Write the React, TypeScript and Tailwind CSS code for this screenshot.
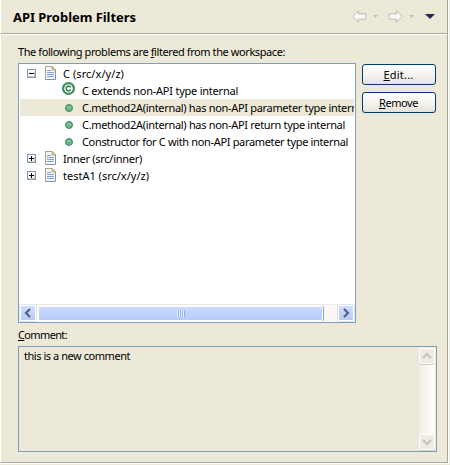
import { useLayoutEffect, useRef, useState, type ReactNode } from "react";

/** Text spaced out so that it spans exactly `width` pixels. */
function Fit({ width, children }: { width: number; children: ReactNode }) {
  const ref = useRef<HTMLSpanElement>(null);
  const [spacing, setSpacing] = useState(0);
  useLayoutEffect(() => {
    const el = ref.current;
    if (!el) return;
    const count = (el.textContent ?? "").length;
    const natural = el.getBoundingClientRect().width - spacing * count;
    const next = (width - natural) / count;
    if (Math.abs(next - spacing) > 0.01) setSpacing(next);
  }, [width, spacing]);
  return (
    <span ref={ref} className="inline-block shrink-0 whitespace-nowrap" style={{ letterSpacing: `${spacing}px` }}>
      {children}
    </span>
  );
}

function Key({ children }: { children: ReactNode }) {
  return <span className="underline decoration-1 underline-offset-[1px] [text-decoration-skip-ink:none]">{children}</span>;
}

function Toggle({ open }: { open: boolean }) {
  return (
    <svg width="9" height="9" viewBox="0 0 9 9" shapeRendering="crispEdges" className="shrink-0">
      <rect x=".5" y=".5" width="8" height="8" fill="#fbfaf7" stroke="#7b98b5" />
      <path d="M1 7h7v1H1zM7 3h1v5H7z" fill="#d2cbbd" />
      <path d="M2 4h5v1H2z" fill="#000" />
      {!open && <path d="M4 2h1v5H4z" fill="#000" />}
    </svg>
  );
}

function FileIcon() {
  return (
    <svg width="11" height="14" viewBox="0 0 11 14" className="shrink-0">
      <path d="M.5.5h6.5l3.5 3.5v9.5H.5z" fill="#f2f7ff" stroke="#8292b4" />
      <path d="M.5 13V.5H7" fill="none" stroke="#b0a678" />
      <path d="M7 .5V4h3.5z" fill="#ead49a" stroke="#b69a56" strokeWidth=".8" />
      <path d="M2 4.5h4M2 6.5h7M2 8.5h7M2 10.5h7" stroke="#86a3d6" />
    </svg>
  );
}

function ClassIcon() {
  return (
    <svg width="13" height="13" viewBox="0 0 13 13" className="shrink-0">
      <circle cx="6.5" cy="6.5" r="6.1" fill="#3f925c" stroke="#2d7b4b" strokeWidth=".8" />
      <circle cx="6.5" cy="6.5" r="4.3" fill="#fff" />
      <path d="M8.7 5.3A2.4 2.4 0 1 0 8.7 7.7" fill="none" stroke="#2d7b4b" strokeWidth="1.5" />
    </svg>
  );
}

function MethodIcon() {
  return (
    <svg width="8" height="8" viewBox="0 0 8 8" className="shrink-0">
      <circle cx="4" cy="4" r="3.5" fill="#69b583" stroke="#31845a" strokeWidth=".9" />
      <path d="M2.2 3.2h3.6" stroke="#a5d5b2" />
    </svg>
  );
}

function FileRow({ name, width, open = false }: { name: string; width: number; open?: boolean }) {
  return (
    <div className="flex h-[17px] items-center pl-[7px]">
      <Toggle open={open} />
      <div className="ml-[9px] mr-[7px] flex pb-px"><FileIcon /></div>
      <Fit width={width}>{name}</Fit>
    </div>
  );
}

function ProblemRow({ text, width, kind = "method", selected = false }: { text: string; width: number; kind?: string; selected?: boolean }) {
  return (
    <div className={`flex h-[17px] items-center overflow-hidden pl-[42px] ${selected ? "bg-[#ece9d8]" : ""}`}>
      <div className={`mr-[6px] flex w-[14px] shrink-0 ${kind === "class" ? "justify-start pb-[4px]" : "justify-center"}`}>
        {kind === "class" ? <ClassIcon /> : <MethodIcon />}
      </div>
      <Fit width={width}>{text}</Fit>
    </div>
  );
}

function PushButton({ children }: { children: ReactNode }) {
  return (
    <button className="flex h-[21px] w-[74px] items-center justify-center rounded-[3px] border border-[#003c74] bg-linear-to-b from-white via-[#f5f4ef] to-[#e5e2d8] pr-px">
      {children}
    </button>
  );
}

function NavArrow({ flip = false }: { flip?: boolean }) {
  return (
    <svg width="15" height="13" viewBox="0 0 15 13" className={flip ? "-scale-x-100" : ""}>
      <path d="M.8 6.5L6.5.8v3h7.3v5.4H6.5v3z" fill="#f8f7f3" stroke="#bcbab5" strokeLinejoin="round" />
    </svg>
  );
}

function ScrollButton({ path, disabled = false }: { path: string; disabled?: boolean }) {
  return (
    <div className={`flex size-[16px] shrink-0 items-center justify-center rounded-[2px] border border-white ${disabled ? "bg-[#edebe2] shadow-[0_1px_0_#cfccb8]" : "bg-linear-to-b from-[#d2ddfe] to-[#b8cbf6] shadow-[0_0_0_1px_#dce5f8]"}`}>
      <svg width="10" height="10" viewBox="0 0 10 10">
        <path d={path} fill="none" stroke={disabled ? "#c6c5bd" : "#4d6185"} strokeWidth="2.2" />
      </svg>
    </div>
  );
}

export default function App() {
  return (
    <div className="flex h-[465px] w-[450px] flex-col overflow-hidden bg-[#ece9d8] text-[11px] leading-[17px] text-black [font-family:'Noto_Sans','DejaVu_Sans_Condensed',sans-serif]">
      <div className="flex h-[464px] w-[449px] shrink-0 flex-col border-r border-r-white border-b border-b-white">
        <div className="flex h-[463px] shrink-0 flex-col border-r border-b border-l border-[#aca899] border-l-white">
          <header className="flex h-[34px] shrink-0 items-center justify-between border-b border-[#aca899] pl-[12px] pr-[12px] shadow-[0_1px_0_#fff]">
            <h1 className="pt-[1px] text-[13px] font-bold"><Fit width={123}>API Problem Filters</Fit></h1>
            <div className="flex items-center">
              <NavArrow />
              <svg width="5" height="3" viewBox="0 0 5 3" className="ml-[6px] mr-[10px]"><path d="M0 0h5L2.5 3z" fill="#c2bfb2" /></svg>
              <NavArrow flip />
              <svg width="5" height="3" viewBox="0 0 5 3" className="ml-[6px] mr-[11px]"><path d="M0 0h5L2.5 3z" fill="#c2bfb2" /></svg>
              <svg width="10" height="5" viewBox="0 0 10 5"><path d="M0 0h10L5 5z" fill="#292653" /></svg>
            </div>
          </header>
          <main className="flex flex-col pl-[17px] pt-[9px]">
            <div className="h-[20px]">
              <Fit width={267}>The following problems are <Key>f</Key>iltered from the workspace:</Fit>
            </div>
            <div className="flex gap-[6px]">
              <div className="flex h-[260px] w-[338px] flex-col border border-[#7f9db9] bg-white p-px">
                <div className="flex flex-1 flex-col overflow-hidden">
                  <FileRow name="C (src/x/y/z)" width={61} open />
                  <ProblemRow text="C extends non-API type internal" width={156} kind="class" />
                  <ProblemRow text="C.method2A(internal) has non-API parameter type internal" width={284} selected />
                  <ProblemRow text="C.method2A(internal) has non-API return type internal" width={263} />
                  <ProblemRow text="Constructor for C with non-API parameter type internal" width={266} />
                  <FileRow name="Inner (src/inner)" width={79} />
                  <FileRow name="testA1 (src/x/y/z)" width={86} />
                </div>
                <div className="flex h-[17px] items-center border-t border-[#eeede5] bg-[#f9f8f4]">
                  <ScrollButton path="M7 1L3 5l4 4" />
                  <div className="ml-[2px] flex h-[15px] w-[285px] items-center justify-center rounded-[2px] border border-white bg-linear-to-b from-[#cbd9ff] to-[#b7ccfa] shadow-[1px_0_0_#84a4d9]">
                    <div className="flex h-[7px] w-[8px] justify-between">
                      <i className="w-[2px] border-r border-l border-r-[#8fafe9] border-l-[#edf3ff]" />
                      <i className="w-[2px] border-r border-l border-r-[#8fafe9] border-l-[#edf3ff]" />
                      <i className="w-[2px] border-r border-l border-r-[#8fafe9] border-l-[#edf3ff]" />
                      <i className="w-[2px] border-r border-l border-r-[#8fafe9] border-l-[#edf3ff]" />
                    </div>
                  </div>
                  <div className="ml-auto flex"><ScrollButton path="M3 1l4 4-4 4" /></div>
                </div>
              </div>
              <div className="flex flex-col gap-[7px] pt-[1px]">
                <PushButton><Fit width={30}><Key>E</Key>dit...</Fit></PushButton>
                <PushButton><Fit width={39}><Key>R</Key>emove</Fit></PushButton>
              </div>
            </div>
            <div className="h-[23px] pt-[3px]"><Fit width={49}><Key>C</Key>omment:</Fit></div>
            <div className="flex h-[106px] w-[419px] justify-between border border-[#7f9db9] p-px pl-[5px]">
              <p className="leading-[15px]"><Fit width={106}>this is a new comment</Fit></p>
              <div className="flex w-[16px] flex-col justify-between bg-linear-to-r from-[#f0eee8] to-[#fefefb]">
                <ScrollButton path="M1 7l4-4 4 4" disabled />
                <ScrollButton path="M1 3l4 4 4-4" disabled />
              </div>
            </div>
          </main>
        </div>
      </div>
    </div>
  );
}
